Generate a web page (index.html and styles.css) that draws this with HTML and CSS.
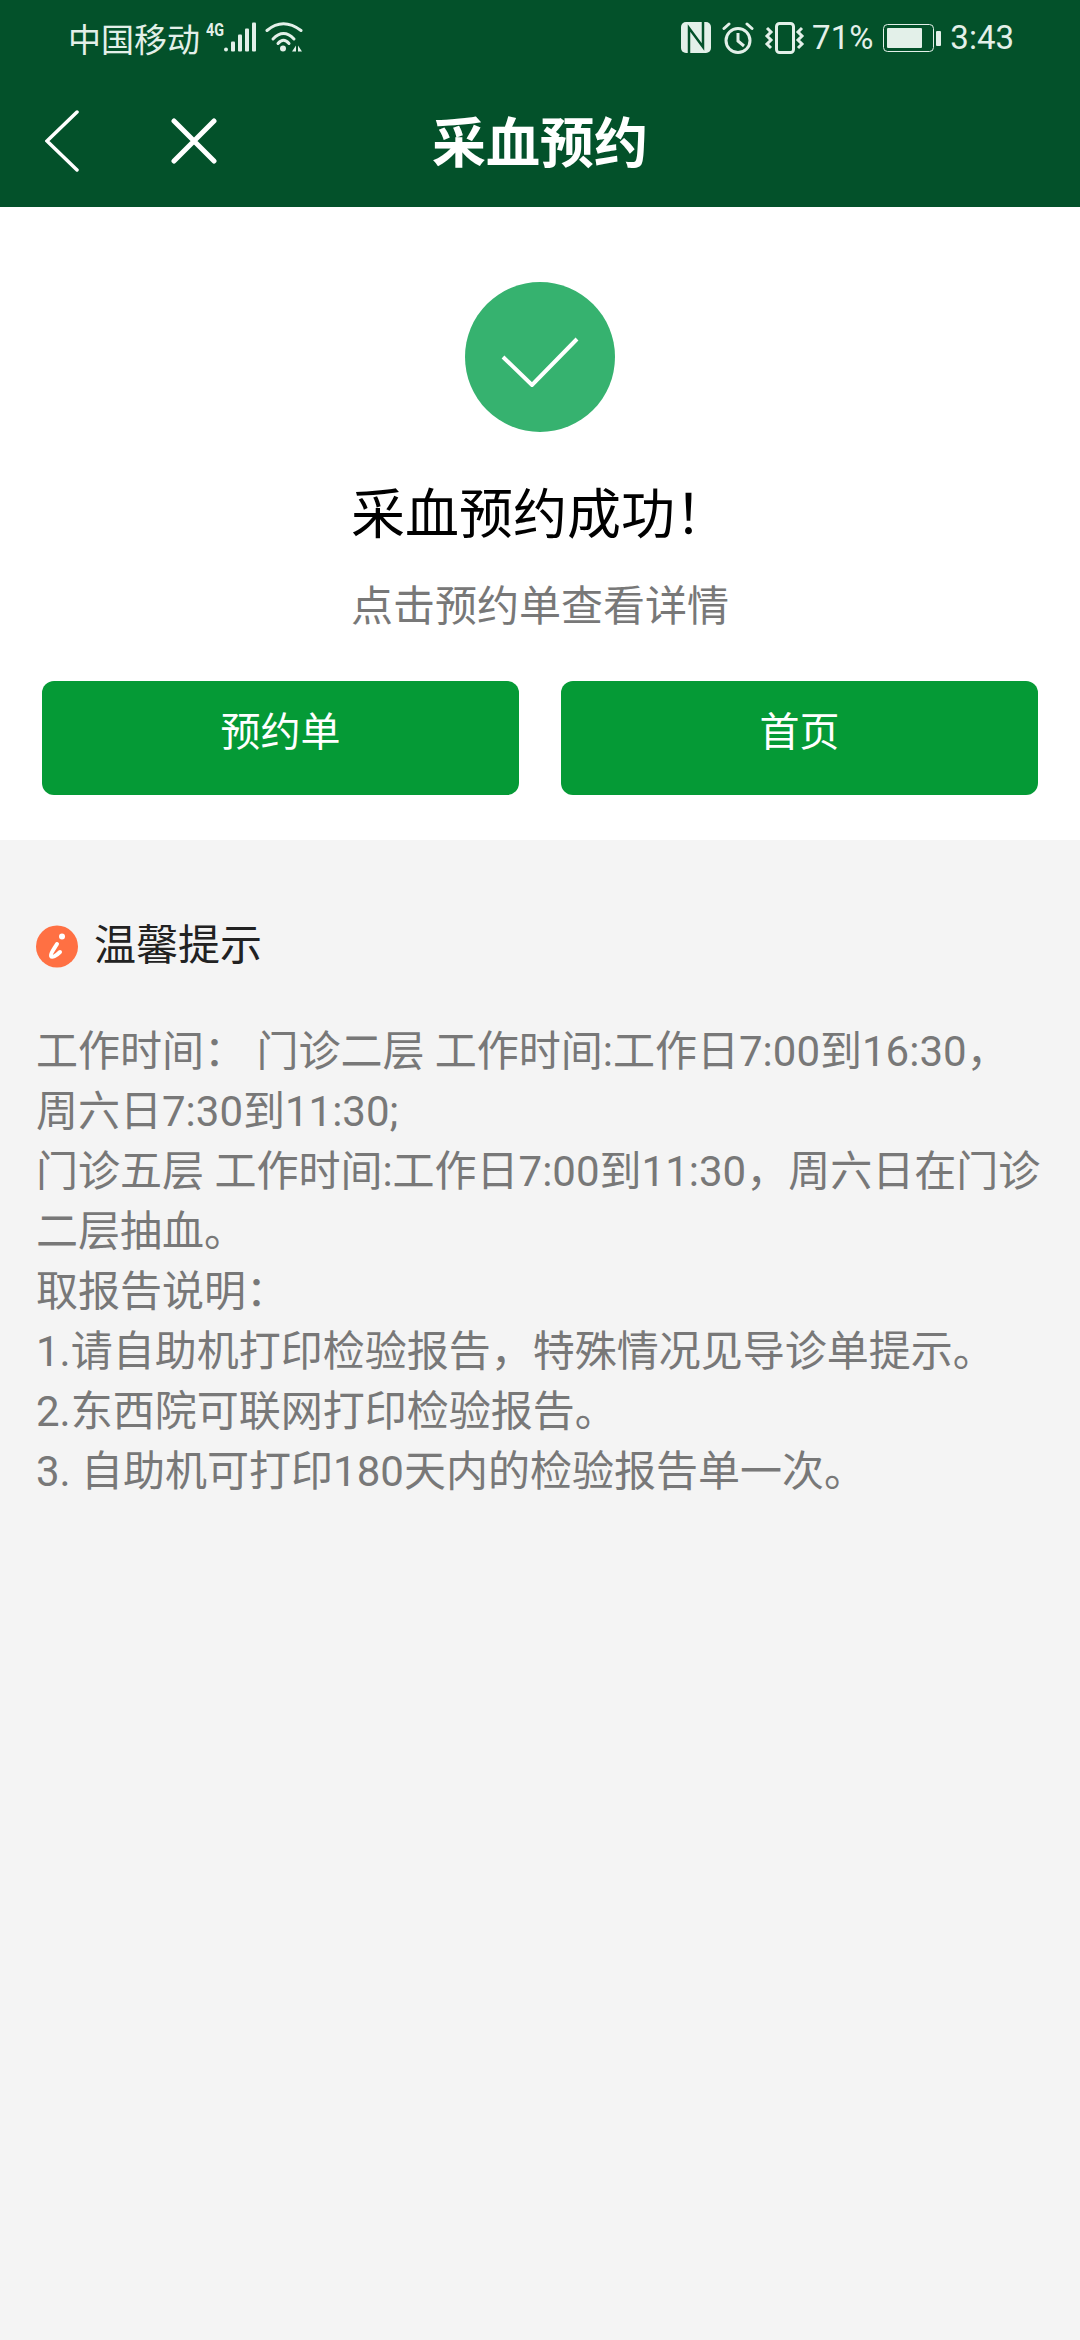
FILE: index.html
```html
<!DOCTYPE html>
<html lang="zh-CN">

<head>
    <meta charset="utf-8">
    <title>采血预约</title>
    <link rel="stylesheet" href="styles.css">
</head>

<body>

<div class="header">
    <div class="statusBar">
        <div class="statusGroup">
            <span class="carrier">中国移动</span>
            <svg class="icoSignal" width="50" height="38" viewBox="0 -2 50 38">
                <text class="netType" x="0" y="15" textLength="18" lengthAdjust="spacingAndGlyphs">4G</text>
                <rect x="18" y="26.500" width="4" height="4" rx="2" fill="#e3f0e9"/>
                <rect x="25" y="20.500" width="4" height="10" rx="1" fill="#e3f0e9"/>
                <rect x="32" y="13.500" width="4" height="17" rx="1" fill="#e3f0e9"/>
                <rect x="39" y="7.500" width="4" height="23" rx="1" fill="#e3f0e9"/>
                <rect x="46" y="1.500" width="4" height="29" rx="1" fill="#e3f0e9"/>
            </svg>
            <svg class="icoWifi" width="40" height="34" viewBox="0 0 40 34" fill="none" stroke="#e3f0e9" stroke-width="3" stroke-linecap="round">
                <path d="M3 9.500Q19-4 37 9.500"/>
                <path d="M9 18Q19.500 7 30 18"/>
                <path d="M14 22.500Q19.500 16 25 22.500"/>
                <circle cx="19" cy="27.500" r="3" fill="#e3f0e9" stroke="none"/>
                <path d="M32 24.500v6h-4zM34 24.500v6h4z" fill="#e3f0e9" stroke="none"/>
            </svg>
        </div>
        <div class="statusGroup">
            <svg class="icoNfc" width="30" height="31" viewBox="0 0 30 31">
                <rect width="30" height="31" rx="5" fill="#e3f0e9"/>
                <path d="M8 31V6L22 25V0" fill="none" stroke="#03512a" stroke-width="2.500"/>
            </svg>
            <svg class="icoAlarm" width="32" height="32" viewBox="0 0 32 32" fill="none" stroke="#e3f0e9" stroke-width="3">
                <circle cx="16" cy="18.500" r="12"/>
                <path d="M16 11v8l6 5"/>
                <path d="M2 6.500L7 2M30 6.500L25 2" stroke-linecap="round"/>
            </svg>
            <svg class="icoVibrate" width="42" height="32" viewBox="0 0 42 32" fill="none" stroke="#e3f0e9" stroke-width="3">
                <rect x="12.500" y="1.500" width="17" height="29" rx="3"/>
                <path d="M3 6l4 4-4 4 4 4-4 4 4 4"/>
                <path d="M38 6l-4 4 4 4-4 4 4 4-4 4"/>
            </svg>
            <span class="statusText">71%</span>
            <svg class="icoBattery" width="58" height="28" viewBox="0 0 58 28" fill="none">
                <rect x="0.500" y="0.500" width="50" height="27" rx="4" stroke="#e3f0e9"/>
                <rect x="4" y="4" width="35" height="20" rx="1" fill="#e3f0e9"/>
                <rect x="53" y="7" width="5" height="15" rx="1" fill="#e3f0e9"/>
            </svg>
            <span class="statusText statusTime">3:43</span>
        </div>
    </div>
    <div class="navBar">
        <div class="navBtns">
            <svg width="34" height="62" viewBox="0 0 34 62" fill="none" stroke="#fff" stroke-width="3.500" stroke-linecap="round">
                <path d="M32 2L2 31l30 29"/>
            </svg>
            <svg width="46" height="46" viewBox="0 0 46 46" fill="none" stroke="#fff" stroke-width="5" stroke-linecap="round">
                <path d="M3 3l40 40M43 3L3 43"/>
            </svg>
        </div>
        <div class="navTitle">采血预约</div>
        <div></div>
    </div>
</div>

<div class="result">
    <div class="okCircle">
        <svg class="okCheck" width="78" height="50" viewBox="0 0 78 50" fill="none" stroke="#fff" stroke-width="4">
            <path d="M2 20l29 28L76 2"/>
        </svg>
    </div>
    <h1 class="okTitle">采血预约成功！</h1>
    <p class="okTips">点击预约单查看详情</p>
    <div class="btnRow">
        <a class="btn">预约单</a>
        <a class="btn">首页</a>
    </div>
</div>

<div class="notice">
    <div class="noticeHead">
        <svg width="42" height="43" viewBox="0 0 42 43">
            <circle cx="21" cy="21.500" r="21" fill="#ff7043"/>
            <path d="M21 19C18 24 14 29 15 31C16 33 20 31 24 27" fill="none" stroke="#fff" stroke-width="4" stroke-linecap="round"/>
            <circle cx="26" cy="11.500" r="3" fill="#fff"/>
        </svg>
        <span>温馨提示</span>
    </div>
    <div class="noticeBody">
        工作时间： 门诊二层 工作时间:工作日7:00到16:30，<br>
        周六日7:30到11:30;<br>
        门诊五层 工作时间:工作日7:00到11:30，周六日在门诊<br>
        二层抽血。<br>
        取报告说明：<br>
        1.请自助机打印检验报告，特殊情况见导诊单提示。<br>
        2.东西院可联网打印检验报告。<br>
        3. 自助机可打印180天内的检验报告单一次。
    </div>
</div>

</body>

</html>
```
FILE: styles.css
```css
html,
body,
h1,
p {
    margin: 0;
    padding: 0;
}

body {
    width: 1080px;
    height: 2340px;
    display: flex;
    flex-direction: column;
    background: #f4f4f4;
    font-family: Roboto, "Noto Sans CJK SC", sans-serif;
}

.header {
    height: 207px;
    background: #03512a;
}

.statusBar {
    height: 75px;
    display: flex;
    justify-content: space-between;
    align-items: center;
    padding: 0 66px 0 68px;
    color: #e3f0e9;
}

.statusGroup {
    display: flex;
    align-items: center;
}

.carrier {
    font-size: 33px;
}

.netType {
    font-size: 18px;
    font-weight: 700;
    fill: #e3f0e9;
}

.icoSignal {
    margin-left: 6px;
}

.icoWifi {
    margin-left: 8px;
}

.icoAlarm {
    margin-left: 11px;
}

.icoVibrate {
    margin-left: 10px;
}

.statusText {
    font-size: 33px;
    margin-left: 6px;
}

.icoBattery {
    margin-left: 10px;
}

.statusTime {
    margin-left: 9px;
}

.navBar {
    height: 132px;
    padding: 0 45px;
    display: grid;
    grid-template-columns: 1fr auto 1fr;
    align-items: center;
}

.navBtns {
    display: flex;
    align-items: center;
    gap: 92px;
}

.navTitle {
    margin-bottom: 4px;
    font-size: 54px;
    font-weight: 700;
    color: #fff;
}

.result {
    height: 633px;
    background: #fff;
    display: flex;
    flex-direction: column;
    align-items: center;
    padding-top: 75px;
    box-sizing: border-box;
}

.okCircle {
    width: 150px;
    height: 150px;
    border-radius: 50%;
    background: #36b26f;
    display: flex;
    align-items: center;
    justify-content: center;
}

.okCheck {
    margin-top: 10px;
}

.okTitle {
    margin-top: 45px;
    font-size: 54px;
    line-height: 78px;
    font-weight: 400;
    color: #000;
}

.okTips {
    margin-top: 22px;
    font-size: 42px;
    line-height: 60px;
    color: #787878;
}

.btnRow {
    margin-top: 44px;
    align-self: stretch;
    display: flex;
    gap: 42px;
    padding: 0 42px;
}

.btn {
    flex: 1;
    height: 114px;
    line-height: 103px;
    text-align: center;
    border-radius: 12px;
    background: #059a36;
    color: #fff;
    font-size: 40px;
}

.notice {
    padding: 76px 36px 0;
}

.noticeHead {
    display: flex;
    align-items: center;
    gap: 16px;
    font-size: 42px;
    line-height: 60px;
    color: #222;
}

.noticeBody {
    margin-top: 46px;
    font-size: 42px;
    line-height: 60px;
    color: #787878;
    white-space: nowrap;
}
```
